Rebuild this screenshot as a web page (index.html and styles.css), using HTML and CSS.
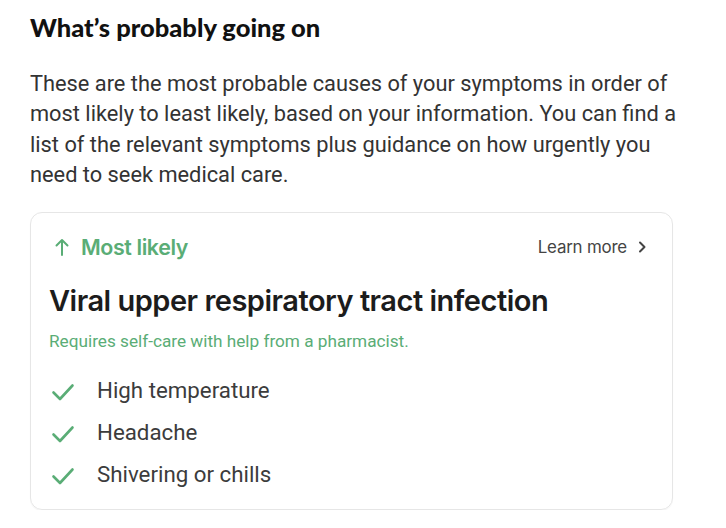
FILE: index.html
```html
<!DOCTYPE html>
<html lang="en">
<head>
<meta charset="utf-8">
<link rel="stylesheet" href="styles.css">
</head>
<body>
<main class="page">
  <h1 class="title">What’s probably going on</h1>
  <p class="intro">These are the most probable causes of your symptoms in order of most likely to least likely, based on your information. You can find a list of the relevant symptoms plus guidance on how urgently you need to seek medical care.</p>
  <section class="card">
    <div class="card-top">
      <div class="likely">
        <svg class="arrow" width="14" height="18" viewBox="0 0 14 18"><path d="M7 17V2M1.5 7.5L7 2l5.5 5.5" fill="none" stroke="#5aad76" stroke-width="2" stroke-linecap="round" stroke-linejoin="round"/></svg>
        <span>Most likely</span>
      </div>
      <a class="learn" href="#">Learn more
        <svg width="10" height="14" viewBox="0 0 10 14"><path d="M3 2.5L7.5 7 3 11.5" fill="none" stroke="#444" stroke-width="2" stroke-linecap="round" stroke-linejoin="round"/></svg>
      </a>
    </div>
    <h2 class="condition">Viral upper respiratory tract infection</h2>
    <p class="care">Requires self-care with help from a pharmacist.</p>
    <ul class="symptoms">
      <li><svg width="24" height="20" viewBox="0 0 24 20"><path d="M2.5 10.5l6.5 6.5L21.5 3.5" fill="none" stroke="#5aad76" stroke-width="2.6" stroke-linecap="round" stroke-linejoin="round"/></svg><span>High temperature</span></li>
      <li><svg width="24" height="20" viewBox="0 0 24 20"><path d="M2.5 10.5l6.5 6.5L21.5 3.5" fill="none" stroke="#5aad76" stroke-width="2.6" stroke-linecap="round" stroke-linejoin="round"/></svg><span>Headache</span></li>
      <li><svg width="24" height="20" viewBox="0 0 24 20"><path d="M2.5 10.5l6.5 6.5L21.5 3.5" fill="none" stroke="#5aad76" stroke-width="2.6" stroke-linecap="round" stroke-linejoin="round"/></svg><span>Shivering or chills</span></li>
    </ul>
  </section>
</main>
</body>
</html>
```

FILE: styles.css
```css
* { box-sizing: border-box; }
body {
  margin: 0;
  background: #fff;
  font-family: Roboto, "Liberation Sans", sans-serif;
  color: #333;
}
.page {
  padding: 11px 53px 0 30px;
}
.title {
  margin: 0;
  font-family: Lato, sans-serif;
  font-weight: 900;
  font-size: 25.5px;
  line-height: 32px;
  color: #111;
}
.intro {
  margin: 26px -6px 0 0;
  font-size: 21.8px;
  line-height: 30.3px;
  color: #333;
}
.card {
  margin-top: 22px;
  border: 1px solid #e6e6e6;
  border-radius: 12px;
  padding: 20px 24px 21px 18px;
  box-shadow: 0 1px 1px rgba(0,0,0,0.04);
}
.card-top {
  display: flex;
  justify-content: space-between;
  align-items: center;
  height: 28px;
}
.likely {
  display: flex;
  align-items: center;
  gap: 12px;
  padding-left: 6px;
  color: #5aad76;
  font-family: Inter, sans-serif;
  font-weight: 600;
  font-size: 21.4px;
  letter-spacing: -0.4px;
}
.learn {
  display: flex;
  align-items: center;
  gap: 10px;
  margin-right: 1px;
  color: #444;
  text-decoration: none;
  font-family: Inter, sans-serif;
  font-size: 16.9px;
  letter-spacing: -0.2px;
}
.condition {
  margin: 22px 0 0;
  font-family: Inter, sans-serif;
  font-weight: 600;
  font-size: 29px;
  line-height: 36px;
  letter-spacing: -0.5px;
  color: #1c1c1c;
}
.care {
  margin: 11px 0 0;
  font-size: 17.2px;
  line-height: 22px;
  color: #5aad76;
}
.symptoms {
  list-style: none;
  margin: 24px 0 0;
  padding: 0;
  display: flex;
  flex-direction: column;
  gap: 14px;
}
.symptoms li {
  display: flex;
  align-items: center;
  gap: 22px;
  height: 28px;
  font-size: 22.3px;
  color: #3c3c3c;
}
.symptoms svg { margin-left: 2px; margin-top: 4px; }
```
